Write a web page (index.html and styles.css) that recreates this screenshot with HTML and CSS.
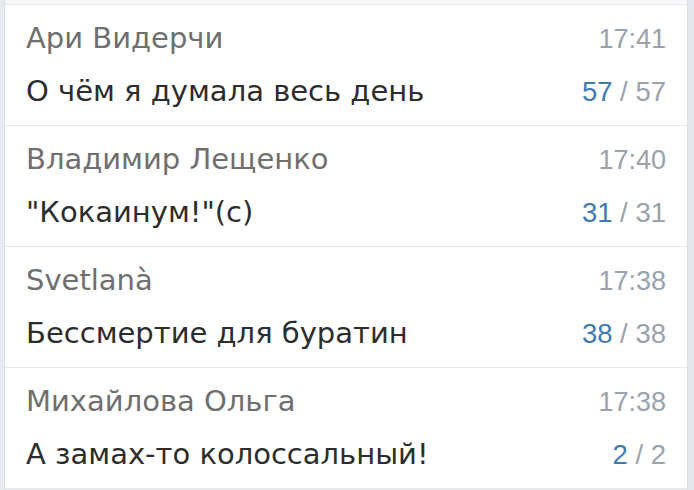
FILE: index.html
```html
<!DOCTYPE html>
<html lang="ru">
<head>
<meta charset="utf-8">
<link rel="stylesheet" href="styles.css">
</head>
<body>
<div class="frame">
  <div class="list">
    <div class="top-strip"></div>
    <div class="row">
      <div class="line"><span class="name">Ари Видерчи</span><span class="time">17:41</span></div>
      <div class="line"><span class="msg">О чём я думала весь день</span><span class="count"><span class="read">57</span> / 57</span></div>
    </div>
    <div class="row">
      <div class="line"><span class="name">Владимир Лещенко</span><span class="time">17:40</span></div>
      <div class="line"><span class="msg">"Кокаинум!"(с)</span><span class="count"><span class="read">31</span> / 31</span></div>
    </div>
    <div class="row">
      <div class="line"><span class="name">Svetlanà</span><span class="time">17:38</span></div>
      <div class="line"><span class="msg">Бессмертие для буратин</span><span class="count"><span class="read">38</span> / 38</span></div>
    </div>
    <div class="row">
      <div class="line"><span class="name">Михайлова Ольга</span><span class="time">17:38</span></div>
      <div class="line"><span class="msg">А замах-то колоссальный!</span><span class="count"><span class="read">2</span> / 2</span></div>
    </div>
  </div>
</div>
</body>
</html>
```
FILE: styles.css
```css
html, body {
  margin: 0;
  padding: 0;
}
body {
  width: 694px;
  height: 490px;
  overflow: hidden;
  background: #e4e7ee;
  font-family: "Liberation Sans", Arial, sans-serif;
}
.frame {
  display: flex;
  padding-left: 4px;
  padding-right: 6px;
  background: linear-gradient(to right, #e8ebf0 0, #e8ebf0 4px, transparent 4px);
}
.list {
  flex: 1;
  background: #fff;
  border-left: 1px solid #dcdfe5;
  border-right: 1px solid #dcdfe5;
}
.top-strip {
  height: 4px;
  background: #f6f7f9;
}
.row {
  border-top: 1px solid #e7e8ec;
  padding: 13px 21px 14px 21px;
  display: flex;
  flex-direction: column;
  gap: 13px;
}
.row:last-child {
  border-bottom: 2px solid #e7e8ec;
}
.line {
  display: flex;
  justify-content: space-between;
  align-items: baseline;
  height: 40px;
  line-height: 40px;
}
.name {
  font-family: "DejaVu Sans", "Liberation Sans", sans-serif;
  font-size: 29px;
  color: #6f6f6f;
}
.time {
  font-size: 27px;
  color: #99a2ad;
}
.msg {
  font-family: "DejaVu Sans", "Liberation Sans", sans-serif;
  font-size: 29px;
  color: #2c2d2e;
}
.count {
  font-size: 27.5px;
  color: #99a2ad;
}
.read {
  color: #3f7ab0;
}
```
